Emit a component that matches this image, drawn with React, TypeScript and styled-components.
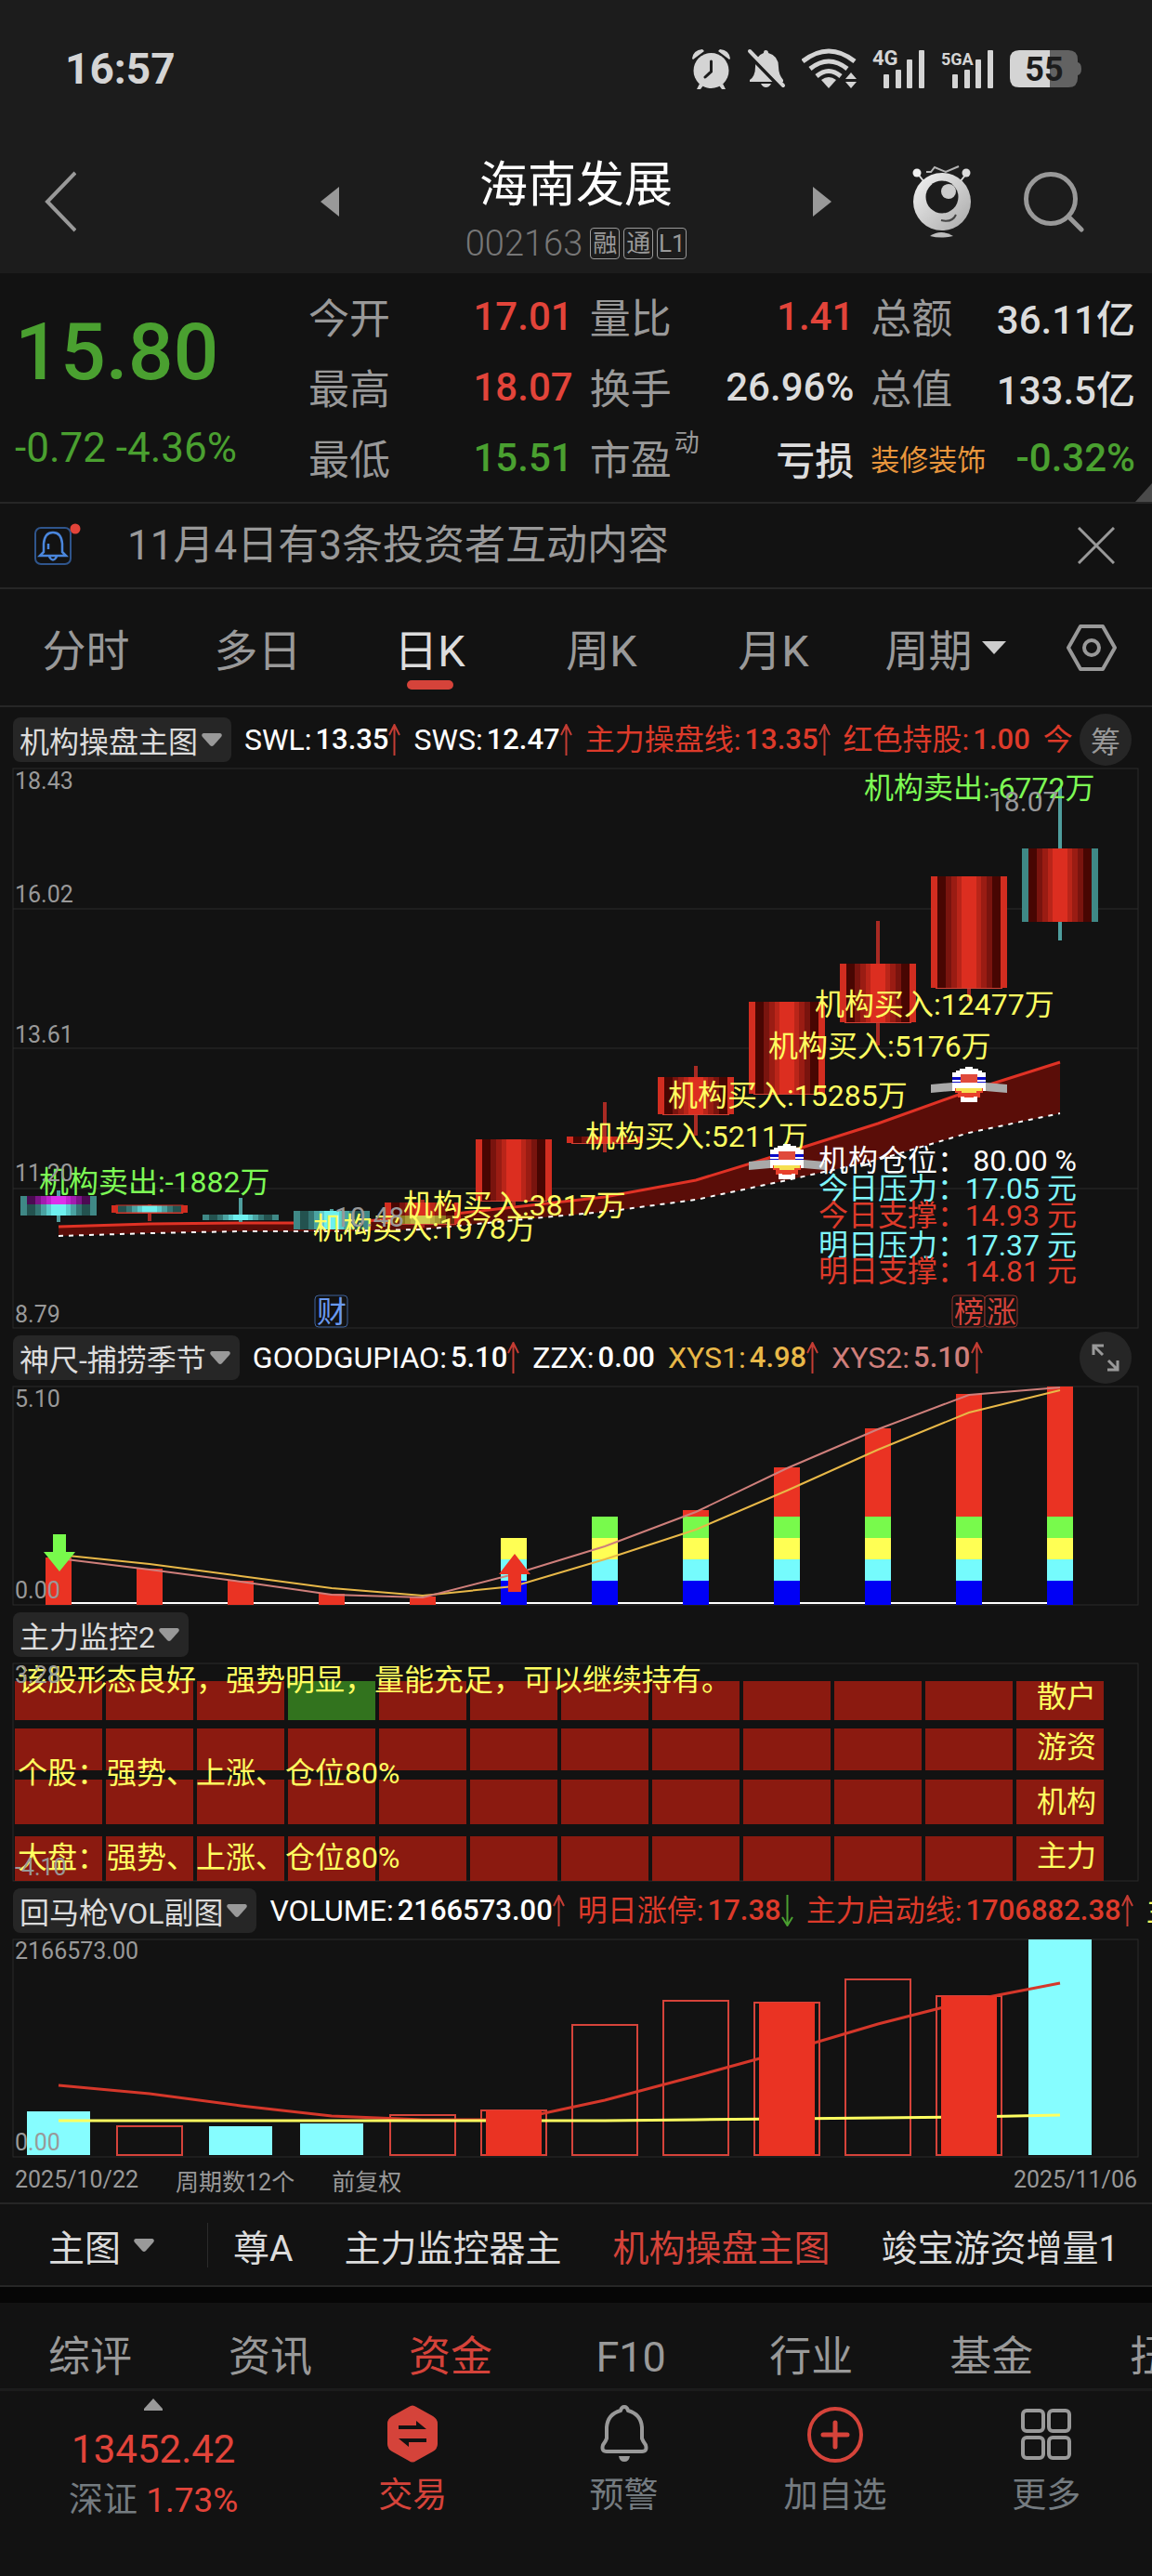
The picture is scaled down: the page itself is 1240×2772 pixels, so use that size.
import React from "react";
import styled, { createGlobalStyle, css } from "styled-components";

const c = {
  bar: "#1c1c1c",
  page: "#121212",
  line: "#262626",
  grid: "#2b2b2b",
  pill: "#262626",
  gray: "#999999",
  text: "#dcdcdc",
  white: "#ffffff",
  red: "#e2443a",
  lineRed: "#dd3a2a",
  green: "#4aa030",
  lime: "#7dfb55",
  yellow: "#ffff60",
  cyan: "#7ff6fa",
  orange: "#e8963c",
  gold: "#e8b848",
  pink: "#cf7f7b",
  slate: "#747b80",
};

const GlobalStyle = createGlobalStyle`
  * { box-sizing: border-box; }
  body {
    margin: 0;
    background: ${c.page};
    color: ${c.text};
    font-family: Roboto, "Noto Sans CJK SC", sans-serif;
    overflow-x: hidden;
  }
  button {
    border: 0;
    padding: 0;
    background: none;
    color: inherit;
    font: inherit;
    white-space: nowrap;
  }
  svg { display: block; flex: none; }
  h1, p, dl, dd, dt { margin: 0; font-weight: 400; }
`;

const Page = styled.div`
  display: flex;
  flex-direction: column;
  width: 100%;
  overflow: hidden;
`;

/* ---------- status bar and title ---------- */

const Top = styled.header`
  background: ${c.bar};
`;

const StatusBar = styled.div`
  display: flex;
  align-items: center;
  justify-content: space-between;
  height: 148px;
  padding: 0 76px 0 70px;
`;

const Clock = styled.span`
  font-size: 46px;
  font-weight: 700;
  line-height: 48px;
  color: #d4d4d4;
`;

const StatusIcons = styled.div`
  display: flex;
  align-items: center;
  gap: 17px;
`;

const TitleBar = styled.div`
  display: grid;
  grid-template-columns: 1fr 48% 1fr;
  align-items: center;
  height: 146px;
  padding: 0 48px 8px;
`;

const TitleMiddle = styled.div`
  display: flex;
  align-items: center;
  justify-content: space-between;
`;

const TitleText = styled.div`
  display: flex;
  flex-direction: column;
  align-items: center;
  gap: 13px;
  padding-top: 14px;
`;

const StockName = styled.h1`
  font-size: 52px;
  line-height: 62px;
  color: ${c.white};
`;

const CodeRow = styled.div`
  display: flex;
  align-items: center;
  gap: 4px;
  line-height: 36px;
`;

const Code = styled.span`
  margin-right: 4px;
  font-size: 38px;
  font-weight: 300;
  color: #777777;
`;

const Badge = styled.span`
  width: 32px;
  height: 34px;
  border: 1px solid ${c.gray};
  border-radius: 4px;
  font-size: 26px;
  line-height: 32px;
  text-align: center;
  color: ${c.gray};
`;

const TitleActions = styled.div`
  display: flex;
  align-items: center;
  justify-content: flex-end;
  gap: 56px;
  padding-right: 24px;
`;

/* ---------- quote ---------- */

const Quote = styled.section`
  position: relative;
  display: grid;
  grid-template-columns: 314px 1fr;
  column-gap: 18px;
  padding: 8px 18px 10px 0;
  border-bottom: 2px solid ${c.line};
`;

const Corner = styled.svg`
  position: absolute;
  right: 0;
  bottom: 0;
`;

const PriceBox = styled.div`
  display: flex;
  flex-direction: column;
  justify-content: space-between;
  padding: 27px 0 24px 16px;
  color: ${c.green};
`;

const Price = styled.span`
  font-size: 86px;
  font-weight: 500;
  line-height: 100px;
`;

const Change = styled.span`
  font-size: 44px;
  line-height: 48px;
  white-space: nowrap;
`;

const Facts = styled.dl`
  display: grid;
  grid-template-columns: repeat(3, 1fr);
  grid-auto-rows: 76px;
  column-gap: 18px;
`;

const Fact = styled.div`
  display: flex;
  align-items: center;
  justify-content: space-between;
  font-size: 42px;
  white-space: nowrap;
`;

const FactLabel = styled.dt<{ $small?: boolean }>`
  font-size: ${(p) => (p.$small ? 31 : 44)}px;
  color: ${(p) => (p.$small ? c.orange : c.gray)};
`;

const Raised = styled.sup`
  margin-left: 3px;
  font-size: 27px;
  line-height: 0;
  vertical-align: 25px;
`;

const FactValue = styled.dd<{ $color: string }>`
  font-weight: 500;
  color: ${(p) => p.$color};
`;

/* ---------- notice ---------- */

const Notice = styled.section`
  display: flex;
  align-items: center;
  height: 92px;
  padding: 0 40px 0 36px;
  border-bottom: 2px solid ${c.line};
`;

const NoticeText = styled.p`
  flex: 1;
  margin-left: 48px;
  font-size: 44px;
  line-height: 60px;
  color: ${c.gray};
`;

/* ---------- tabs ---------- */

const PeriodTabs = styled.nav`
  display: flex;
  height: 127px;
  border-bottom: 2px solid ${c.line};
`;

const PeriodTab = styled.button<{ $active?: boolean }>`
  position: relative;
  display: flex;
  flex: 185 1 0;
  align-items: center;
  justify-content: center;
  gap: 10px;
  font-size: 47px;
  color: ${(p) => (p.$active ? c.text : c.gray)};
  ${(p) =>
    p.$active &&
    css`
      &::after {
        content: "";
        position: absolute;
        bottom: 17px;
        width: 50px;
        height: 10px;
        border-radius: 5px;
        background: #d5433a;
      }
    `}
`;

const SettingsTab = styled.button`
  display: flex;
  flex: 130 1 0;
  align-items: center;
  justify-content: center;
`;

/* ---------- indicator panels ---------- */

const Panels = styled.main`
  padding-top: 3px;
`;

const PanelHead = styled.div`
  display: flex;
  align-items: center;
  height: 63px;
  padding-left: 14px;
`;

const PanelPicker = styled.button`
  display: flex;
  align-items: center;
  gap: 4px;
  height: 48px;
  padding: 0 10px 0 7px;
  border-radius: 8px;
  background: ${c.pill};
  font-size: 32px;
  color: ${c.text};
`;

const Readings = styled.div`
  display: flex;
  flex: 1;
  align-items: center;
  gap: 14px;
  min-width: 0;
  margin-left: 14px;
  overflow: hidden;
  line-height: 48px;
  white-space: nowrap;
`;

const Reading = styled.span<{ $color: string }>`
  display: flex;
  flex: none;
  align-items: center;
  color: ${(p) => p.$color};
`;

const ReadingName = styled.span`
  font-size: 32px;
`;

const ReadingValue = styled.span`
  margin-left: 4px;
  font-size: 31px;
  font-weight: 500;
`;

const RoundButton = styled.button`
  display: flex;
  flex: none;
  align-items: center;
  justify-content: center;
  width: 56px;
  height: 56px;
  margin-right: 22px;
  border-radius: 50%;
  background: ${c.pill};
  font-size: 32px;
  color: ${c.gray};
`;

const Plot = styled.svg`
  width: 100%;
  height: auto;
  overflow: visible;
`;

const AxisText = styled.text`
  font-size: 25px;
  fill: ${c.gray};
`;

const MarkText = styled.text`
  font-size: 30px;
  fill: ${c.gray};
`;

const NoteText = styled.text`
  font-size: 32px;
`;

const PlotFoot = styled.div`
  display: flex;
  gap: 40px;
  align-items: center;
  height: 51px;
  padding: 0 16px;
  border-bottom: 2px solid ${c.line};
  font-size: 25px;
  color: ${c.gray};
`;

const LastDate = styled.span`
  margin-left: auto;
`;

/* ---------- indicator strip ---------- */

const Strip = styled.nav`
  display: flex;
  align-items: center;
  height: 89px;
  border-bottom: 2px solid ${c.line};
  font-size: 39px;
  overflow: hidden;
`;

const StripPicker = styled.button`
  display: flex;
  flex: none;
  align-items: center;
  gap: 13px;
  height: 48px;
  padding: 0 56px 0 52px;
  border-right: 1px solid ${c.grid};
`;

const StripItems = styled.div`
  display: flex;
  gap: 55px;
  padding-left: 27px;
`;

const StripItem = styled.button<{ $active?: boolean }>`
  color: ${(p) => (p.$active ? "#d5433a" : c.text)};
`;

const Gap = styled.div`
  height: 17px;
  background: #060606;
`;

const SectionTabs = styled.nav`
  display: flex;
  height: 95px;
  padding-top: 26px;
  border-bottom: 3px solid #1c1c1c;
  overflow: hidden;
`;

const SectionTab = styled.button<{ $active?: boolean }>`
  flex: 0 0 15.65%;
  height: 66px;
  font-size: 45px;
  line-height: 66px;
  color: ${(p) => (p.$active ? "#d5433a" : c.gray)};
`;

/* ---------- bottom bar ---------- */

const BottomBar = styled.footer`
  display: grid;
  grid-template-columns: 330fr repeat(4, 227fr);
  height: 199px;
`;

const IndexBox = styled.button`
  display: flex;
  flex-direction: column;
  align-items: center;
  padding-top: 8px;
  color: ${c.red};
`;

const IndexValue = styled.span`
  margin-top: 16px;
  font-size: 42px;
  line-height: 52px;
`;

const IndexName = styled.span`
  margin-top: 4px;
  font-size: 37px;
  line-height: 50px;
`;

const Muted = styled.span`
  color: ${c.slate};
`;

const Action = styled.button<{ $active?: boolean }>`
  display: flex;
  flex-direction: column;
  align-items: center;
  gap: 12px;
  padding-top: 15px;
  font-size: 37px;
  line-height: 48px;
  color: ${(p) => (p.$active ? "#d5433a" : c.slate)};
`;

/* ---------- icons ---------- */

const Caret = ({ w = 22, color = c.gray }: { w?: number; color?: string }) => (
  <svg width={w} height={14} viewBox="0 0 22 14" fill={color}>
    <path d="M2 0H20Q23 1 21 4L13 13Q11 15 9 13L1 4Q-1 1 2 0Z" />
  </svg>
);

const Trend = ({ down }: { down?: boolean }) => (
  <svg width={13} height={34} viewBox="0 0 13 34" fill="none" stroke={down ? c.green : "#c43c33"} strokeWidth={2}>
    {down ? <path d="M6.500 0V33M1 24L6.500 33L12 24" /> : <path d="M6.500 34V1M1 12L6.500 1L12 12" />}
  </svg>
);

const Alarm = () => (
  <svg width={43} height={44} viewBox="0 0 43 44">
    <circle cx="21.500" cy="24" r="19" fill="#d4d4d4" />
    <path d="M1 11Q2 2 12 1L14 3L2 12Z M42 11Q41 2 31 1L29 3L41 12Z M9 38L6 44H10L13 40Z M34 38L37 44H33L30 40Z" fill="#d4d4d4" />
    <path d="M21.500 14V25L15 31" fill="none" stroke="#1c1c1c" strokeWidth="3" strokeLinecap="round" />
  </svg>
);

const BellOff = () => (
  <svg width={42} height={44} viewBox="0 0 42 44">
    <path d="M20 2Q23 2 23 5Q34 8 34 20Q34 28 39 34V36H3V34Q9 30 9 20Q9 8 18 5Q18 2 20 2Z M15 38H26Q24 42 20.500 42Q17 42 15 38Z" fill="#d4d4d4" />
    <path d="M0 5L37 43" stroke="#1c1c1c" strokeWidth="4" />
    <path d="M3 3L39 40" stroke="#d4d4d4" strokeWidth="4" strokeLinecap="round" />
  </svg>
);

const Wifi = () => (
  <svg width={59} height={44} viewBox="0 0 59 44">
    <g fill="none" stroke="#d4d4d4" strokeWidth="5">
      <path d="M1 14Q29 -8 57 14" />
      <path d="M9 22Q29 6 49 22" />
      <path d="M16 30Q29 19 42 30" />
    </g>
    <path d="M21 34Q29 28 37 34L29 43Z" fill="#d4d4d4" />
    <path d="M47 33L53 26L59 33Z M47 36L53 43L59 36Z" fill="#d4d4d4" />
  </svg>
);

const SignalText = styled.text<{ $long: boolean }>`
  font-size: ${(p) => (p.$long ? 18 : 22)}px;
  font-weight: 700;
  fill: #d4d4d4;
`;

const SignalIcon = styled.svg`
  overflow: visible;
`;

const Signal = ({ label }: { label: string }) => (
  <SignalIcon width={57} height={44} viewBox="0 0 57 44">
    <SignalText $long={label.length > 2} x={0} y={18}>{label}</SignalText>
    <g fill="#d4d4d4">
      <rect x="12" y="28" width="6" height="15" rx="1" />
      <rect x="25" y="23" width="6" height="20" rx="1" />
      <rect x="37" y="12" width="6" height="31" rx="1" />
      <rect x="50" y="2" width="6" height="41" rx="1" />
    </g>
  </SignalIcon>
);

const BatteryText = styled.text`
  font-size: 36px;
  font-weight: 700;
  fill: #1c1c1c;
`;

const Battery = () => (
  <svg width={77} height={40} viewBox="0 0 77 40">
    <path d="M10 0H43V40H10Q0 40 0 30V10Q0 0 10 0Z" fill="#d4d4d4" />
    <path d="M43 0H63Q73 0 73 10V13Q77 14 77 20Q77 26 73 27V30Q73 40 63 40H43Z" fill="#626262" />
    <BatteryText x={37} y={33} textAnchor="middle">55</BatteryText>
  </svg>
);

const Mascot = () => (
  <svg width={64} height={78} viewBox="0 0 64 78">
    <defs>
      <linearGradient id="ball" x1="0" y1="0" x2="1" y2="1">
        <stop offset="0" stopColor="#f4f4f4" />
        <stop offset="1" stopColor="#a8a8a8" />
      </linearGradient>
    </defs>
    <path d="M5 8L13 18M59 8L51 18" stroke="#d8d8d8" strokeWidth="2" />
    <circle cx="5" cy="8" r="4.500" fill="#f0f0f0" />
    <circle cx="58" cy="8" r="4.500" fill="#dcdcdc" />
    <path d="M15 7H20L24 2L36 7L50 1" fill="none" stroke="#b4b4b4" strokeWidth="2" />
    <circle cx="32" cy="39" r="31" fill="url(#ball)" />
    <circle cx="32" cy="34" r="17.500" fill="#1c1c1c" />
    <circle cx="39" cy="28" r="8" fill="#cccccc" />
    <path d="M31 59Q43 62 47 53" fill="none" stroke="#444444" strokeWidth="2" />
    <path d="M19 76Q31 68 44 76Q31 79 19 76Z" fill="#bdbdbd" />
  </svg>
);

const SearchIcon = () => (
  <svg width={66} height={66} viewBox="0 0 66 66" fill="none" stroke={c.gray} strokeWidth="5">
    <circle cx="29" cy="30" r="26.500" />
    <path d="M48 49L62 63" strokeLinecap="round" />
  </svg>
);

const NoticeBell = () => (
  <svg width={53} height={48} viewBox="0 0 53 48" fill="none">
    <rect x="2" y="5" width="38" height="39" rx="6" stroke="#2f558c" strokeWidth="2" />
    <path d="M11 31V22Q12 10 21 10Q30 10 31 22V31L35 35H7ZM17 36Q21 43 25 36M16 22V28" stroke="#4a86dc" strokeWidth="2.500" />
    <circle cx="45" cy="6" r="5.500" fill="#e2443a" />
  </svg>
);

const Hexagon = () => (
  <svg width={54} height={50} viewBox="0 0 54 50" fill="none" stroke={c.gray} strokeWidth="4" strokeLinejoin="round">
    <path d="M15 2H39L52 25L39 48H15L2 25Z" />
    <circle cx="27" cy="25" r="8" />
  </svg>
);

const Trade = () => (
  <svg width={56} height={62} viewBox="0 0 56 62">
    <path d="M24 2Q28 -1 32 2L50 12Q55 15 55 20V42Q55 47 50 50L32 60Q28 63 24 60L6 50Q1 47 1 42V20Q1 15 6 12Z" fill="#d5433a" />
    <path d="M13 26H43L32 17V22H13ZM43 36H13L24 45V40H43Z" fill="#121212" />
  </svg>
);

const Bell = () => (
  <svg width={52} height={62} viewBox="0 0 52 62" fill="none" stroke={c.gray} strokeWidth="4" strokeLinejoin="round">
    <path d="M26 2Q29 2 30 6Q44 10 45 24V36Q46 39 49 43Q51 50 45 50H7Q1 50 3 43Q6 39 7 36V24Q8 10 22 6Q23 2 26 2Z" />
    <path d="M20 55H32Q31 61 26 61Q21 61 20 55Z" fill={c.gray} stroke="none" />
  </svg>
);

const AddIcon = () => (
  <svg width={60} height={62} viewBox="0 0 60 62" fill="none" stroke="#d5433a" strokeWidth="4">
    <circle cx="30" cy="32" r="28" />
    <path d="M17 32H43M30 19V45" strokeWidth="5" strokeLinecap="round" />
  </svg>
);

const More = () => (
  <svg width={56} height={62} viewBox="0 0 56 62" fill="none" stroke={c.gray} strokeWidth="4">
    {[3, 31].map((x) =>
      [6, 35].map((y) => <rect key={`${x}-${y}`} x={x} y={y} width="22" height="22" rx="4" />)
    )}
  </svg>
);

/* ---------- charts ---------- */

const colX = (i: number) => 63 + 98 * i;
const toPoints = (ys: number[]) => ys.map((y, i) => `${colX(i)},${y}`).join(" ");

const halves = [34, 25, 19, 13, 8];
const shades: Record<string, string[]> = {
  red: ["#480602", "#79140e", "#9a1c13", "#b92519", "#dc2e20"],
  cyan: ["#23524f", "#347573", "#4aa3a2", "#5bcccc", "#6df0ef"],
  magenta: ["#4b0a52", "#7d1488", "#a31cb0", "#c124cf", "#dd30ea"],
  yellow: ["#6e2a10", "#8c7a20", "#a89a35", "#bdb043", "#d0cc50"],
};
const RED_EDGE = "#d22d20";
const TEAL_EDGE = "#3f8886";

type Candle = {
  top: number;
  bottom: number;
  high: number;
  low: number;
  edge: string;
  fill: string;
  split?: { at: number; fill: string };
};

const candles: Candle[] = [
  { top: 460, bottom: 481, high: 454, low: 488, edge: TEAL_EDGE, fill: "magenta", split: { at: 469, fill: "cyan" } },
  { top: 470, bottom: 478, high: 469, low: 487, edge: RED_EDGE, fill: "cyan" },
  { top: 480, bottom: 486, high: 462, low: 488, edge: TEAL_EDGE, fill: "cyan" },
  { top: 476, bottom: 496, high: 474, low: 496, edge: TEAL_EDGE, fill: "cyan" },
  { top: 467, bottom: 490, high: 464, low: 494, edge: RED_EDGE, fill: "red", split: { at: 481, fill: "yellow" } },
  { top: 399, bottom: 465, high: 399, low: 471, edge: RED_EDGE, fill: "red" },
  { top: 396, bottom: 403, high: 359, low: 413, edge: RED_EDGE, fill: "red" },
  { top: 332, bottom: 372, high: 320, low: 395, edge: RED_EDGE, fill: "red" },
  { top: 251, bottom: 350, high: 251, low: 350, edge: RED_EDGE, fill: "red" },
  { top: 210, bottom: 273, high: 164, low: 298, edge: RED_EDGE, fill: "red" },
  { top: 116, bottom: 236, high: 116, low: 250, edge: RED_EDGE, fill: "red" },
  { top: 86, bottom: 165, high: 20, low: 185, edge: TEAL_EDGE, fill: "red" },
];

const Shaded = ({ x, top, bottom, fill }: { x: number; top: number; bottom: number; fill: string }) => (
  <>
    {halves.map((h, i) => (
      <rect key={h} x={x - h} y={top} width={h * 2} height={bottom - top} fill={shades[fill][i]} />
    ))}
  </>
);

const CandleShape = ({ x, k }: { x: number; k: Candle }) => (
  <g>
    <path d={`M${x} ${k.high}V${k.low}`} stroke={k.edge === RED_EDGE ? "#a92a23" : "#4f9e9e"} strokeWidth="4" />
    <rect x={x - 41} y={k.top} width={82} height={k.bottom - k.top} fill={k.edge} />
    <Shaded x={x} top={k.top} bottom={k.bottom} fill={k.fill} />
    {k.split && <Shaded x={x} top={k.split.at} bottom={k.bottom} fill={k.split.fill} />}
    {k.edge === RED_EDGE && <rect x={x - 36} y={k.bottom} width={72} height={1} fill="#d04034" />}
    {k.edge === RED_EDGE && k.fill === "cyan" && (
      <rect x={x - 36} y={k.top} width={72} height={k.bottom - k.top} fill="none" stroke={RED_EDGE} />
    )}
  </g>
);

const Plane = ({ x, y }: { x: number; y: number }) => (
  <g transform={`translate(${x} ${y})`}>
    <path d="M-41 19L-18 17V26L-41 28Z M41 19L18 17V26L41 28Z" fill="#a9a9a9" />
    <path d="M-4 0H4V2H10V4H14V6H18V26H-18V6H-14V4H-10V2H-4Z" fill="#ffffff" />
    <path d="M-18 11H18V14H-18Z M-18 16H18V17H-18Z" fill="#0a0ac8" />
    <rect x="-9" y="8" width="18" height="9" fill="#e04a3c" />
    <path d="M-15 23H15V28H12V33H-12V28H-15Z" fill="#e8402c" />
    <path d="M-14 23H14V26H8V28H-8V26H-14Z" fill="#f6e050" />
    <path d="M-9 32H9V38H-9Z" fill="#ffffff" />
    <rect x="-5" y="30" width="10" height="3" fill="#e8402c" />
  </g>
);

const mainLine = [493, 490, 489, 489, 483, 472, 461, 443, 413, 382, 347, 316];
const supportLine = [503, 500, 498, 498, 496, 486, 477, 464, 443, 421, 392, 371];

const trades = [
  { x: 42, y: 456, t: "机构卖出:-1882万", f: c.lime },
  { x: 434, y: 481, t: "机构买入:3817万", f: c.yellow },
  { x: 337, y: 506, t: "机构买入:1978万", f: c.yellow },
  { x: 630, y: 407, t: "机构买入:5211万", f: c.yellow },
  { x: 719, y: 363, t: "机构买入:15285万", f: c.yellow },
  { x: 827, y: 310, t: "机构买入:5176万", f: c.yellow },
  { x: 877, y: 265, t: "机构买入:12477万", f: c.yellow },
  { x: 930, y: 32, t: "机构卖出:-6772万", f: c.lime },
];

const levels = [
  { y: 433, n: "机构仓位：", v: "80.00 %", f: c.white },
  { y: 463, n: "今日压力：", v: "17.05 元", f: c.cyan },
  { y: 492, n: "今日支撑：", v: "14.93 元", f: c.lineRed },
  { y: 524, n: "明日压力：", v: "17.37 元", f: c.cyan },
  { y: 552, n: "明日支撑：", v: "14.81 元", f: c.lineRed },
];

const tags = [
  { x: 339, t: "财", f: "#6a9af0", s: "#3f639c" },
  { x: 1025, t: "榜", f: "#d5433a", s: "#8c302a" },
  { x: 1060, t: "涨", f: "#d5433a", s: "#8c302a" },
];

const Frame = ({ h }: { h: number }) => <rect x="14" y="0" width="1211" height={h} fill="none" stroke={c.grid} strokeWidth="1" />;

const MainChart = () => (
  <Plot viewBox="0 0 1240 602">
    <Frame h={602} />
    {[151, 301, 452].map((y) => (
      <path key={y} d={`M14 ${y}H1225`} stroke={c.grid} />
    ))}
    <polygon
      points={`${toPoints(mainLine)} ${supportLine.map((y, i) => `${colX(i)},${y}`).reverse().join(" ")}`}
      fill="#5a0d08"
    />
    <polyline points={toPoints(mainLine)} fill="none" stroke="#e03225" strokeWidth="3" />
    <polyline points={toPoints(supportLine)} fill="none" stroke="#ffffff" strokeWidth="2" strokeDasharray="5 6" />
    {candles.map((k, i) => (
      <CandleShape key={i} x={colX(i)} k={k} />
    ))}
    {trades.map((t) => (
      <NoteText key={t.t} x={t.x} y={t.y} fill={t.f}>{t.t}</NoteText>
    ))}
    <Plane x={847} y={404} />
    <Plane x={1043} y={321} />
    {levels.map((l) => (
      <React.Fragment key={l.n}>
        <NoteText x={881} y={l.y} fill={l.f}>{l.n}</NoteText>
        <NoteText x={1159} y={l.y} fill={l.f} textAnchor="end">{l.v}</NoteText>
      </React.Fragment>
    ))}
    <MarkText x={360} y={493}>10.48</MarkText>
    <MarkText x={1064} y={46}>18.07</MarkText>
    {tags.map((t) => (
      <g key={t.t}>
        <rect x={t.x} y="567" width="35" height="34" rx="4" fill={c.page} stroke={t.s} />
        <NoteText x={t.x + 18} y={596} fill={t.f} textAnchor="middle">{t.t}</NoteText>
      </g>
    ))}
    {[["18.43", 22], ["16.02", 144], ["13.61", 295], ["11.20", 444], ["8.79", 596]].map(([t, y]) => (
      <AxisText key={t} x={16} y={y}>{t}</AxisText>
    ))}
  </Plot>
);

const barTops = [184, 196, 209, 223, 226, 235, 235, 133, 87, 45, 8, 0];
const xys2 = [185, 197, 210, 224, 227, 202, 172, 135, 88, 46, 9, 1];
const xys1 = [181, 191, 204, 217, 225, 215, 186, 154, 112, 68, 28, 4];

const SeasonChart = () => (
  <Plot viewBox="0 0 1240 235">
    <Frame h={235} />
    <path d="M63 233H1140" stroke="#ffffff" strokeWidth="2" />
    {barTops.map((top, i) => {
      const x = colX(i) - 14;
      return (
        <g key={i}>
          <rect x={x} y={top} width="28" height={235 - top} fill="#ea3323" />
          {i > 5 && <rect x={x} y="140" width="28" height="23" fill="#78fa4c" />}
          {i > 4 && (
            <>
              <rect x={x} y="163" width="28" height="23" fill="#ffff54" />
              <rect x={x} y="186" width="28" height="23" fill="#75fbfd" />
              <rect x={x} y="209" width="28" height="26" fill="#0000f5" />
            </>
          )}
        </g>
      );
    })}
    <polyline points={toPoints(xys1)} fill="none" stroke={c.gold} strokeWidth="2" />
    <polyline points={toPoints(xys2)} fill="none" stroke={c.pink} strokeWidth="2" />
    <path d="M57 159H71V178H81L64 199L47 178H57Z" fill="#78fa4c" />
    <path d="M554 180L571 202H561V221H547V202H537Z" fill="#ea3323" />
    <AxisText x={16} y={22}>5.10</AxisText>
    <AxisText x={16} y={228}>0.00</AxisText>
  </Plot>
);

const heatRows = [
  { y: 19, h: 42, name: "散户", ny: 47 },
  { y: 70, h: 45, name: "游资", ny: 101 },
  { y: 125, h: 48, name: "机构", ny: 160 },
  { y: 186, h: 48, name: "主力", ny: 218 },
];

const HeatChart = () => (
  <Plot viewBox="0 0 1240 234">
    <Frame h={234} />
    {heatRows.map((r, ri) =>
      candles.map((_, i) => (
        <rect key={`${ri}-${i}`} x={16 + 98 * i} y={r.y} width="94" height={r.h} fill={ri === 0 && i === 3 ? "#32731e" : "#8b1a10"} />
      ))
    )}
    <NoteText x={19} y={29} fill={c.yellow}>该股形态良好，强势明显，量能充足，可以继续持有。</NoteText>
    <NoteText x={19} y={129} fill={c.yellow}>个股：强势、上涨、仓位80%</NoteText>
    <NoteText x={19} y={220} fill={c.yellow}>大盘：强势、上涨、仓位80%</NoteText>
    {heatRows.map((r) => (
      <NoteText key={r.name} x={1116} y={r.ny} fill={c.yellow}>{r.name}</NoteText>
    ))}
    <AxisText x={16} y={21}>3.28</AxisText>
    <AxisText x={16} y={228}>-4.10</AxisText>
  </Plot>
);

type Volume = { top: number; kind: "down" | "up" | "limit" };
const volumes: Volume[] = [
  { top: 185, kind: "down" },
  { top: 201, kind: "up" },
  { top: 201, kind: "down" },
  { top: 198, kind: "down" },
  { top: 189, kind: "up" },
  { top: 184, kind: "limit" },
  { top: 92, kind: "up" },
  { top: 66, kind: "up" },
  { top: 68, kind: "limit" },
  { top: 43, kind: "up" },
  { top: 61, kind: "limit" },
  { top: 0, kind: "down" },
];
const launch = [157, 166, 179, 190, 194, 194, 173, 147, 120, 91, 66, 47];
const base = [195, 195, 195, 195, 195, 195, 195, 194, 193, 192, 191, 189];

const VolumeChart = () => (
  <Plot viewBox="0 0 1240 234">
    <Frame h={234} />
    {volumes.map((v, i) =>
      v.kind === "down" ? (
        <rect key={i} x={colX(i) - 34} y={v.top} width="68" height={232 - v.top} fill="#86fdff" />
      ) : (
        <rect key={i} x={colX(i) - 35} y={v.top} width="70" height={232 - v.top} fill="none" stroke="#d5433a" strokeWidth="2" />
      )
    )}
    <polyline points={toPoints(launch)} fill="none" stroke="#d5372a" strokeWidth="3" />
    <polyline points={toPoints(base)} fill="none" stroke={c.yellow} strokeWidth="3" />
    {volumes.map(
      (v, i) => v.kind === "limit" && <rect key={i} x={colX(i) - 30} y={v.top} width="60" height={233 - v.top} fill="#ea3323" />
    )}
    <AxisText x={16} y={21}>2166573.00</AxisText>
    <AxisText x={16} y={227}>0.00</AxisText>
  </Plot>
);

/* ---------- page ---------- */

const facts = [
  { n: "今开", v: "17.01", f: c.red },
  { n: "量比", v: "1.41", f: c.red },
  { n: "总额", v: "36.11亿", f: c.text },
  { n: "最高", v: "18.07", f: c.red },
  { n: "换手", v: "26.96%", f: c.text },
  { n: "总值", v: "133.5亿", f: c.text },
  { n: "最低", v: "15.51", f: c.green },
  { n: "市盈", v: "亏损", f: c.text, sup: "动" },
  { n: "装修装饰", v: "-0.32%", f: c.green, small: true },
];

type Item = { n: string; v?: string; f: string; t?: "up" | "down" };

const Head = ({ name, items, action }: { name: string; items: Item[]; action?: React.ReactNode }) => (
  <PanelHead>
    <PanelPicker>
      {name}
      <Caret />
    </PanelPicker>
    <Readings>
      {items.map((r) => (
        <Reading key={r.n} $color={r.f}>
          <ReadingName>{r.n}</ReadingName>
          {r.v && <ReadingValue>{r.v}</ReadingValue>}
          {r.t && <Trend down={r.t === "down"} />}
        </Reading>
      ))}
    </Readings>
    {action}
  </PanelHead>
);

export default function App() {
  return (
    <Page>
      <GlobalStyle />
      <Top>
        <StatusBar>
          <Clock>16:57</Clock>
          <StatusIcons>
            <Alarm />
            <BellOff />
            <Wifi />
            <Signal label="4G" />
            <Signal label="5GA" />
            <Battery />
          </StatusIcons>
        </StatusBar>
        <TitleBar>
          <button aria-label="返回">
            <svg width={34} height={66} viewBox="0 0 34 66" fill="none" stroke={c.gray} strokeWidth="4">
              <path d="M33 2L3 33L33 64" />
            </svg>
          </button>
          <TitleMiddle>
            <button aria-label="上一只">
              <svg width={20} height={32} viewBox="0 0 20 32" fill={c.gray}><path d="M20 0V32L0 16Z" /></svg>
            </button>
            <TitleText>
              <StockName>海南发展</StockName>
              <CodeRow>
                <Code>002163</Code>
                <Badge>融</Badge>
                <Badge>通</Badge>
                <Badge>L1</Badge>
              </CodeRow>
            </TitleText>
            <button aria-label="下一只">
              <svg width={20} height={32} viewBox="0 0 20 32" fill={c.gray}><path d="M0 0V32L20 16Z" /></svg>
            </button>
          </TitleMiddle>
          <TitleActions>
            <button aria-label="助手"><Mascot /></button>
            <button aria-label="搜索"><SearchIcon /></button>
          </TitleActions>
        </TitleBar>
      </Top>

      <Quote>
        <PriceBox>
          <Price>15.80</Price>
          <Change>-0.72 -4.36%</Change>
        </PriceBox>
        <Facts>
          {facts.map((f) => (
            <Fact key={f.n}>
              <FactLabel $small={f.small}>
                {f.n}
                {f.sup && <Raised>{f.sup}</Raised>}
              </FactLabel>
              <FactValue $color={f.f}>{f.v}</FactValue>
            </Fact>
          ))}
        </Facts>
        <Corner width={18} height={20} viewBox="0 0 18 20" fill="#4a4a4a"><path d="M18 0V20H0Z" /></Corner>
      </Quote>

      <Notice>
        <NoticeBell />
        <NoticeText>11月4日有3条投资者互动内容</NoticeText>
        <button aria-label="关闭">
          <svg width={40} height={40} viewBox="0 0 40 40" stroke={c.gray} strokeWidth="3"><path d="M1 1L39 39M39 1L1 39" /></svg>
        </button>
      </Notice>

      <PeriodTabs>
        <PeriodTab>分时</PeriodTab>
        <PeriodTab>多日</PeriodTab>
        <PeriodTab $active>日K</PeriodTab>
        <PeriodTab>周K</PeriodTab>
        <PeriodTab>月K</PeriodTab>
        <PeriodTab>
          周期
          <svg width={26} height={14} viewBox="0 0 26 14" fill="#cccccc"><path d="M0 0H26L13 14Z" /></svg>
        </PeriodTab>
        <SettingsTab aria-label="设置"><Hexagon /></SettingsTab>
      </PeriodTabs>

      <Panels>
        <Head
          name="机构操盘主图"
          items={[
            { n: "SWL:", v: "13.35", f: c.white, t: "up" },
            { n: "SWS:", v: "12.47", f: c.white, t: "up" },
            { n: "主力操盘线:", v: "13.35", f: c.lineRed, t: "up" },
            { n: "红色持股:", v: "1.00", f: c.lineRed },
            { n: "今", f: c.lineRed },
          ]}
          action={<RoundButton>筹</RoundButton>}
        />
        <MainChart />
        <Head
          name="神尺-捕捞季节"
          items={[
            { n: "GOODGUPIAO:", v: "5.10", f: c.white, t: "up" },
            { n: "ZZX:", v: "0.00", f: c.white },
            { n: "XYS1:", v: "4.98", f: c.gold, t: "up" },
            { n: "XYS2:", v: "5.10", f: c.pink, t: "up" },
          ]}
          action={
            <RoundButton aria-label="放大">
              <svg width={30} height={30} viewBox="0 0 30 30" fill="none" stroke={c.gray} strokeWidth="3">
                <path d="M2 12V2H13M2 2L12 12M28 18V28H17M28 28L18 18" />
              </svg>
            </RoundButton>
          }
        />
        <SeasonChart />
        <Head name="主力监控2" items={[]} />
        <HeatChart />
        <Head
          name="回马枪VOL副图"
          items={[
            { n: "VOLUME:", v: "2166573.00", f: c.white, t: "up" },
            { n: "明日涨停:", v: "17.38", f: c.lineRed, t: "down" },
            { n: "主力启动线:", v: "1706882.38", f: c.lineRed, t: "up" },
            { n: "主", f: c.yellow },
          ]}
        />
        <VolumeChart />
        <PlotFoot>
          <span>2025/10/22</span>
          <span>周期数12个</span>
          <span>前复权</span>
          <LastDate>2025/11/06</LastDate>
        </PlotFoot>
      </Panels>

      <Strip>
        <StripPicker>
          主图
          <Caret w={24} />
        </StripPicker>
        <StripItems>
          <StripItem>尊A</StripItem>
          <StripItem>主力监控器主</StripItem>
          <StripItem $active>机构操盘主图</StripItem>
          <StripItem>竣宝游资增量1</StripItem>
        </StripItems>
      </Strip>
      <Gap />
      <SectionTabs>
        <SectionTab>综评</SectionTab>
        <SectionTab>资讯</SectionTab>
        <SectionTab $active>资金</SectionTab>
        <SectionTab>F10</SectionTab>
        <SectionTab>行业</SectionTab>
        <SectionTab>基金</SectionTab>
        <SectionTab>扭亏</SectionTab>
      </SectionTabs>

      <BottomBar>
        <IndexBox>
          <svg width={20} height={13} viewBox="0 0 20 13" fill={c.gray}><path d="M10 0L20 11V13H0V11Z" /></svg>
          <IndexValue>13452.42</IndexValue>
          <IndexName><Muted>深证</Muted> 1.73%</IndexName>
        </IndexBox>
        <Action $active><Trade />交易</Action>
        <Action><Bell />预警</Action>
        <Action><AddIcon />加自选</Action>
        <Action><More />更多</Action>
      </BottomBar>
    </Page>
  );
}
